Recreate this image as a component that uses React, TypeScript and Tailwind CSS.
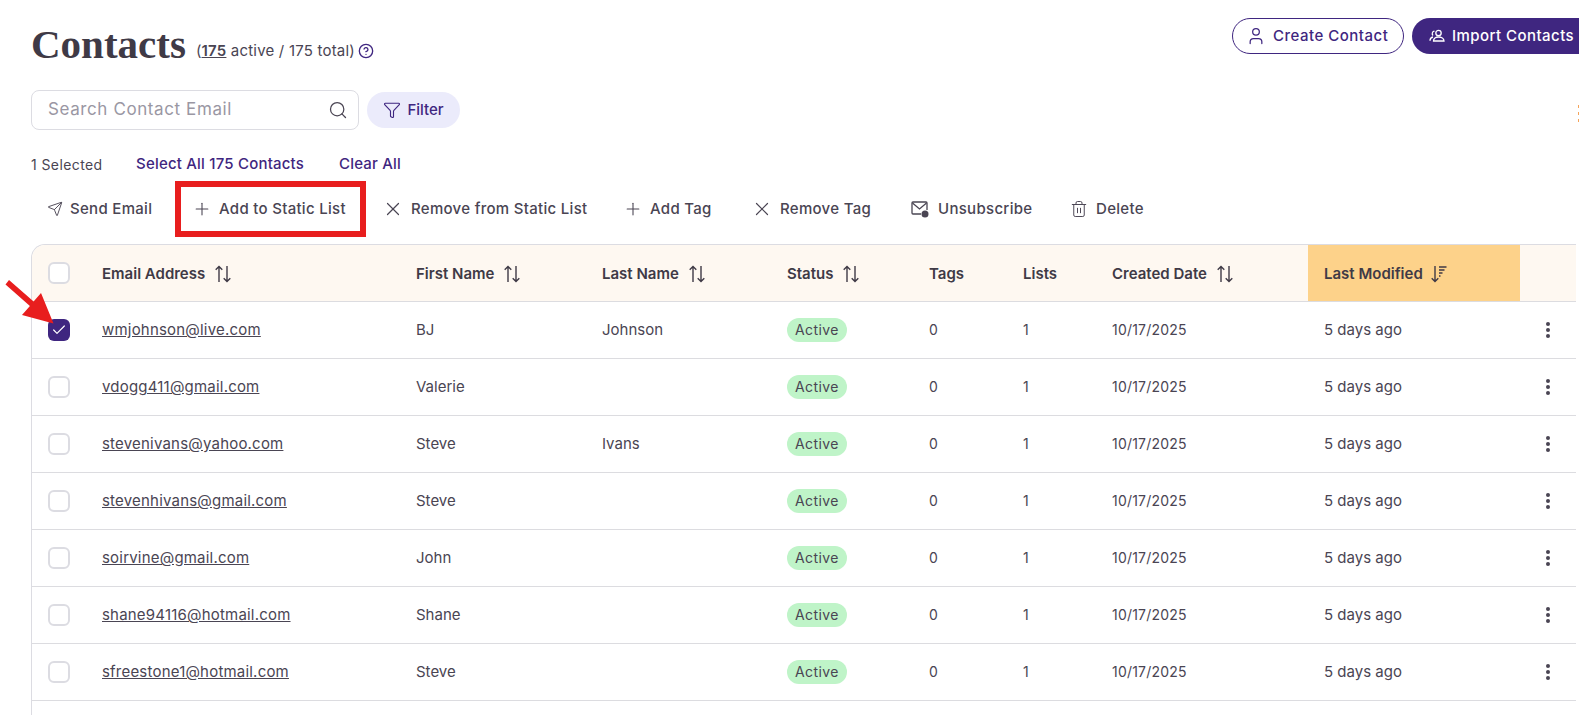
import { Search, Filter, Send, Plus, X, Trash2, User, CircleHelp, Check } from "lucide-react";

const sans = "font-['Inter','Liberation_Sans',sans-serif]";

const rows = [
  ["wmjohnson@live.com", "BJ", "Johnson", true],
  ["vdogg411@gmail.com", "Valerie", "", false],
  ["stevenivans@yahoo.com", "Steve", "Ivans", false],
  ["stevenhivans@gmail.com", "Steve", "", false],
  ["soirvine@gmail.com", "John", "", false],
  ["shane94116@hotmail.com", "Shane", "", false],
  ["sfreestone1@hotmail.com", "Steve", "", false],
] as const;

function SortIcon() {
  return (
    <svg width="18" height="18" viewBox="0 0 18 18" fill="none" stroke="#3f3a46" strokeWidth="1.4" className="shrink-0">
      <path d="M5 17V1.5M1.7 4.8L5 1.5l3.3 3.3" />
      <path d="M13 1v15.5M9.7 13.2l3.3 3.3 3.3-3.3" />
    </svg>
  );
}

function SortDesc() {
  return (
    <svg width="18" height="18" viewBox="0 0 18 18" fill="none" stroke="#3f3a46" strokeWidth="1.4" className="-ml-[2px] shrink-0">
      <path d="M5 1v15.5M1.7 13.2L5 16.5l3.3-3.3" />
      <path d="M9 2h7.5M9 5h5.5M9 8h3.5M9 11h1.5" />
    </svg>
  );
}

function MailOff() {
  return (
    <svg width="18" height="17" viewBox="0 0 18 17" fill="none" stroke="#4a4553" strokeWidth="1.3" className="mr-[2px] shrink-0">
      <path d="M10 13H2a1 1 0 0 1-1-1V2a1 1 0 0 1 1-1h13a1 1 0 0 1 1 1v7" />
      <path d="M1.5 2l7 6 7-6" />
      <circle cx="14" cy="13" r="3.5" fill="#4a4553" stroke="none" />
    </svg>
  );
}

function ImportIcon() {
  return (
    <svg width="16" height="14" viewBox="0 0 16 14" fill="none" stroke="#fff" strokeWidth="1.3" className="shrink-0">
      <circle cx="9.5" cy="4" r="2.7" />
      <path d="M4.5 12c0-2.6 2.2-4 5-4s5.500 1.400 5.500 4z" />
      <path d="M5.500 2.200A2.500 2.500 0 0 0 4 6.500M4 8c-1.800.4-3 1.800-3 3.800" />
    </svg>
  );
}

function Action({ icon, label, className = "" }: { icon: React.ReactNode; label: string; className?: string }) {
  return (
    <button className={`flex items-center gap-[7px] text-[15px] font-medium tracking-[0.3px] text-[#4a4553] ${className}`}>
      {icon}
      {label}
    </button>
  );
}

function Th({ label, icon, className = "" }: { label?: string; icon?: React.ReactNode; className?: string }) {
  return (
    <th className={`px-4 pt-[2px] text-left text-[15px] font-semibold text-[#3f3a46] ${className}`}>
      <span className="flex items-center gap-[9px] whitespace-nowrap">
        {label}
        {icon}
      </span>
    </th>
  );
}

function Box({ checked }: { checked?: boolean }) {
  return checked ? (
    <span className="flex h-[22px] w-[22px] items-center justify-center rounded-[6px] bg-[#3f2680]">
      <Check size={16} color="#fff" strokeWidth={1.8} />
    </span>
  ) : (
    <span className="block h-[22px] w-[22px] rounded-[6px] border-2 border-[#dcdce2] bg-white" />
  );
}

export default function App() {
  return (
    <div className={`relative h-[715px] w-[1579px] overflow-hidden bg-white text-[#4a4553] ${sans}`}>
      <div className="flex flex-col pl-[31px]">
        <div className="flex h-[90px] items-start justify-between">
          <div className="flex items-center pt-[21px]">
            <h1 className="font-['Liberation_Serif',serif] text-[41px] leading-[46px] font-bold text-[#3f3a46]">Contacts</h1>
            <span className="ml-[10px] mt-[14px] flex items-center text-[15px] tracking-[0.2px]">
              (<span className="font-semibold underline">175</span>&nbsp;active / 175 total)
              <CircleHelp size={16} color="#3f2680" className="ml-[3px]" />
            </span>
          </div>
          <div className="mt-[18px] flex shrink-0 gap-[8px] -mr-[16px]">
            <button className="flex h-[36px] w-[172px] items-center gap-[7px] rounded-full border border-[#3f2680] pl-[13px] text-[15px] font-medium tracking-[0.5px] text-[#3f2680]">
              <User size={20} strokeWidth={1.5} />
              Create Contact
            </button>
            <button className="flex h-[36px] w-[183px] items-center gap-[7px] rounded-full bg-[#3f2680] pl-[17px] text-[15px] font-medium tracking-[0.45px] text-white">
              <ImportIcon />
              Import Contacts
            </button>
          </div>
        </div>

        <div className="flex items-center gap-[8px]">
          <div className="flex h-[40px] w-[328px] items-center justify-between rounded-[8px] border border-[#dcdce2] pl-[16px] pr-[10px]">
            <span className="text-[17px] tracking-[0.6px] text-[#9a97a3]">Search Contact Email</span>
            <Search size={20} color="#4a4553" strokeWidth={1.5} />
          </div>
          <button className="flex h-[36px] w-[93px] items-center justify-center gap-[6px] rounded-full bg-[#ebebfb] text-[15px] font-medium text-[#3f2680]">
            <Filter size={18} strokeWidth={1.5} />
            Filter
          </button>
        </div>

        <div className="mt-[25px] flex h-[18px] items-center text-[14px]">
          <span className="w-[105px] tracking-[0.4px]">1 Selected</span>
          <span className="w-[203px] text-[15px] font-medium tracking-[0.2px] text-[#3f2680]">Select All 175 Contacts</span>
          <span className="text-[15px] font-medium tracking-[0.2px] text-[#3f2680]">Clear All</span>
        </div>

        <div className="mt-[8px] flex h-[56px] items-center pl-[16px]">
          <Action icon={<Send size={16} strokeWidth={1.4} />} label="Send Email" className="w-[145px]" />
          <Action icon={<Plus size={20} strokeWidth={1.3} />} label="Add to Static List" className="w-[190px]" />
          <Action icon={<X size={22} strokeWidth={1.3} />} label="Remove from Static List" className="w-[241px]" />
          <Action icon={<Plus size={20} strokeWidth={1.3} />} label="Add Tag" className="w-[128px]" />
          <Action icon={<X size={22} strokeWidth={1.3} />} label="Remove Tag" className="w-[160px]" />
          <Action icon={<MailOff />} label="Unsubscribe" className="w-[159px]" />
          <Action icon={<Trash2 size={18} strokeWidth={1.3} className="mr-[1px]" />} label="Delete" />
        </div>

        <div className="mt-[7px] w-[1545px] overflow-hidden rounded-tl-[14px] border-l border-t border-[#dcdce2]">
          <table className="w-full table-fixed border-collapse">
            <colgroup>
              <col className="w-[54px]" />
              <col className="w-[314px]" />
              <col className="w-[186px]" />
              <col className="w-[185px]" />
              <col className="w-[142px]" />
              <col className="w-[94px]" />
              <col className="w-[89px]" />
              <col className="w-[212px]" />
              <col className="w-[212px]" />
              <col />
            </colgroup>
            <thead>
              <tr className="h-[56px] border-b border-[#dcdce0] bg-[#fef8f1]">
                <th className="pl-[16px] text-left"><Box /></th>
                <Th label="Email Address" icon={<SortIcon />} />
                <Th label="First Name" icon={<SortIcon />} />
                <Th label="Last Name" icon={<SortIcon />} />
                <Th label="Status" icon={<SortIcon />} />
                <Th label="Tags" />
                <Th label="Lists" />
                <Th label="Created Date" icon={<SortIcon />} />
                <Th label="Last Modified" icon={<SortDesc />} className="bg-[#fdd28a]" />
                <th />
              </tr>
            </thead>
            <tbody className="text-[15px] text-[#4a4553]">
              {rows.map(([email, first, last, checked]) => (
                <tr key={email} className="h-[57px] border-b border-[#dcdce0]">
                  <td className="pl-[16px]"><Box checked={checked} /></td>
                  <td className="px-4 pt-[2px] tracking-[0.2px] underline">{email}</td>
                  <td className="px-4 pt-[2px]">{first}</td>
                  <td className="px-4 pt-[2px]">{last}</td>
                  <td className="px-4">
                    <span className="inline-block h-[24px] rounded-full bg-[#bff4c8] px-[8px] text-[14px] leading-[24px] tracking-[0.4px]">Active</span>
                  </td>
                  <td className="px-4 text-[14px]">0</td>
                  <td className="px-4 text-[14px]">1</td>
                  <td className="px-4 text-[14px] tracking-[0.2px]">10/17/2025</td>
                  <td className="px-4 pt-[2px]">5 days ago</td>
                  <td className="pl-[26px]">
                    <span className="flex h-[16px] w-[4px] flex-col justify-between">
                      <i className="block h-[4px] w-[4px] rounded-full bg-[#4a4553]" />
                      <i className="block h-[4px] w-[4px] rounded-full bg-[#4a4553]" />
                      <i className="block h-[4px] w-[4px] rounded-full bg-[#4a4553]" />
                    </span>
                  </td>
                </tr>
              ))}
              <tr className="h-[57px]"><td colSpan={10} /></tr>
            </tbody>
          </table>
        </div>
      </div>

      {/* kebab of a clipped control at the window edge */}
      <div className="absolute right-0 top-[105px] flex flex-col gap-[4px]">
        <i className="block h-[3px] w-[1px] bg-[#f5a45a]" />
        <i className="block h-[3px] w-[1px] bg-[#f5a45a]" />
        <i className="block h-[3px] w-[1px] bg-[#f5a45a]" />
      </div>
      {/* red annotation rectangle */}
      <div className="absolute left-[175px] top-[181px] h-[56px] w-[191px] border-[6px] border-[#e81e1e]" />
      {/* red annotation arrow */}
      <svg className="absolute left-0 top-[280px]" width="56" height="46" viewBox="0 0 56 46">
        <polygon points="9,0 33.600,21.600 41,13 53.500,43.500 22,35 29.900,25.900 5.500,4.500" fill="#e81e1e" />
      </svg>
    </div>
  );
}
